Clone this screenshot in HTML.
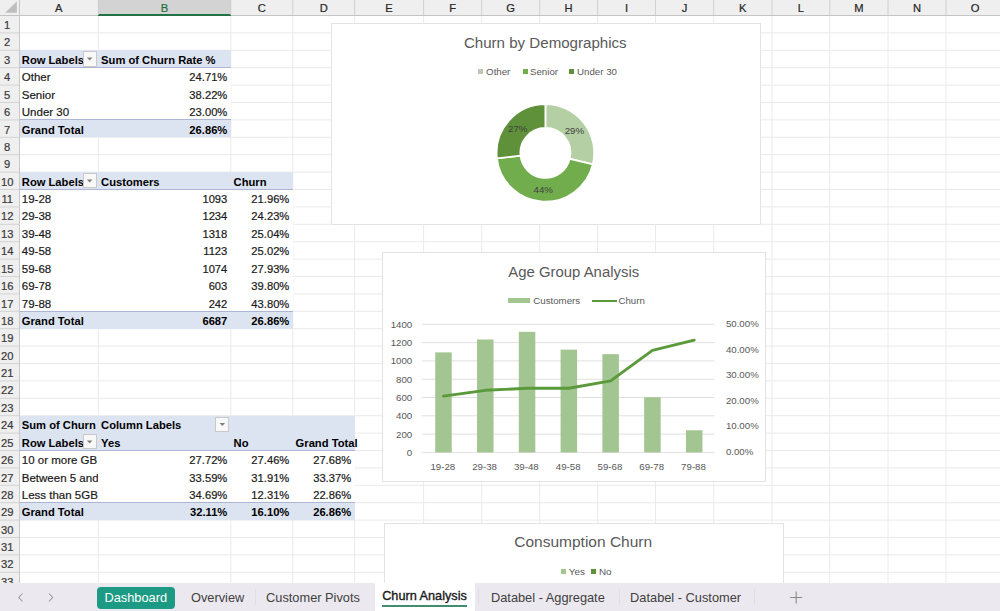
<!DOCTYPE html>
<html><head><meta charset="utf-8"><style>
html,body{margin:0;padding:0;}
body{width:1000px;height:611px;overflow:hidden;position:relative;background:#fff;font-family:"Liberation Sans", sans-serif;}
.t{position:absolute;white-space:nowrap;-webkit-text-stroke:0.2px currentColor;}
.b{-webkit-text-stroke:0;}
div{position:absolute;}
</style></head><body>
<svg style="position:absolute;left:0;top:0" width="1000" height="611"><line x1="98.3" y1="15.5" x2="98.3" y2="583" stroke="#eaeaea" stroke-width="1"/><line x1="230.8" y1="15.5" x2="230.8" y2="583" stroke="#eaeaea" stroke-width="1"/><line x1="292.8" y1="15.5" x2="292.8" y2="583" stroke="#eaeaea" stroke-width="1"/><line x1="354.6" y1="15.5" x2="354.6" y2="583" stroke="#eaeaea" stroke-width="1"/><line x1="423.6" y1="15.5" x2="423.6" y2="583" stroke="#eaeaea" stroke-width="1"/><line x1="481.7" y1="15.5" x2="481.7" y2="583" stroke="#eaeaea" stroke-width="1"/><line x1="539.7" y1="15.5" x2="539.7" y2="583" stroke="#eaeaea" stroke-width="1"/><line x1="597.6" y1="15.5" x2="597.6" y2="583" stroke="#eaeaea" stroke-width="1"/><line x1="655.5" y1="15.5" x2="655.5" y2="583" stroke="#eaeaea" stroke-width="1"/><line x1="713.7" y1="15.5" x2="713.7" y2="583" stroke="#eaeaea" stroke-width="1"/><line x1="772" y1="15.5" x2="772" y2="583" stroke="#eaeaea" stroke-width="1"/><line x1="829.8" y1="15.5" x2="829.8" y2="583" stroke="#eaeaea" stroke-width="1"/><line x1="888" y1="15.5" x2="888" y2="583" stroke="#eaeaea" stroke-width="1"/><line x1="946" y1="15.5" x2="946" y2="583" stroke="#eaeaea" stroke-width="1"/><line x1="1004" y1="15.5" x2="1004" y2="583" stroke="#eaeaea" stroke-width="1"/><line x1="19" y1="32.90" x2="1000" y2="32.90" stroke="#eaeaea" stroke-width="1"/><line x1="19" y1="50.30" x2="1000" y2="50.30" stroke="#eaeaea" stroke-width="1"/><line x1="19" y1="67.70" x2="1000" y2="67.70" stroke="#eaeaea" stroke-width="1"/><line x1="19" y1="85.10" x2="1000" y2="85.10" stroke="#eaeaea" stroke-width="1"/><line x1="19" y1="102.50" x2="1000" y2="102.50" stroke="#eaeaea" stroke-width="1"/><line x1="19" y1="119.90" x2="1000" y2="119.90" stroke="#eaeaea" stroke-width="1"/><line x1="19" y1="137.30" x2="1000" y2="137.30" stroke="#eaeaea" stroke-width="1"/><line x1="19" y1="154.70" x2="1000" y2="154.70" stroke="#eaeaea" stroke-width="1"/><line x1="19" y1="172.10" x2="1000" y2="172.10" stroke="#eaeaea" stroke-width="1"/><line x1="19" y1="189.50" x2="1000" y2="189.50" stroke="#eaeaea" stroke-width="1"/><line x1="19" y1="206.90" x2="1000" y2="206.90" stroke="#eaeaea" stroke-width="1"/><line x1="19" y1="224.30" x2="1000" y2="224.30" stroke="#eaeaea" stroke-width="1"/><line x1="19" y1="241.70" x2="1000" y2="241.70" stroke="#eaeaea" stroke-width="1"/><line x1="19" y1="259.10" x2="1000" y2="259.10" stroke="#eaeaea" stroke-width="1"/><line x1="19" y1="276.50" x2="1000" y2="276.50" stroke="#eaeaea" stroke-width="1"/><line x1="19" y1="293.90" x2="1000" y2="293.90" stroke="#eaeaea" stroke-width="1"/><line x1="19" y1="311.30" x2="1000" y2="311.30" stroke="#eaeaea" stroke-width="1"/><line x1="19" y1="328.70" x2="1000" y2="328.70" stroke="#eaeaea" stroke-width="1"/><line x1="19" y1="346.10" x2="1000" y2="346.10" stroke="#eaeaea" stroke-width="1"/><line x1="19" y1="363.50" x2="1000" y2="363.50" stroke="#eaeaea" stroke-width="1"/><line x1="19" y1="380.90" x2="1000" y2="380.90" stroke="#eaeaea" stroke-width="1"/><line x1="19" y1="398.30" x2="1000" y2="398.30" stroke="#eaeaea" stroke-width="1"/><line x1="19" y1="415.70" x2="1000" y2="415.70" stroke="#eaeaea" stroke-width="1"/><line x1="19" y1="433.10" x2="1000" y2="433.10" stroke="#eaeaea" stroke-width="1"/><line x1="19" y1="450.50" x2="1000" y2="450.50" stroke="#eaeaea" stroke-width="1"/><line x1="19" y1="467.90" x2="1000" y2="467.90" stroke="#eaeaea" stroke-width="1"/><line x1="19" y1="485.30" x2="1000" y2="485.30" stroke="#eaeaea" stroke-width="1"/><line x1="19" y1="502.70" x2="1000" y2="502.70" stroke="#eaeaea" stroke-width="1"/><line x1="19" y1="520.10" x2="1000" y2="520.10" stroke="#eaeaea" stroke-width="1"/><line x1="19" y1="537.50" x2="1000" y2="537.50" stroke="#eaeaea" stroke-width="1"/><line x1="19" y1="554.90" x2="1000" y2="554.90" stroke="#eaeaea" stroke-width="1"/><line x1="19" y1="572.30" x2="1000" y2="572.30" stroke="#eaeaea" stroke-width="1"/><line x1="19" y1="589.70" x2="1000" y2="589.70" stroke="#eaeaea" stroke-width="1"/><line x1="19" y1="607.10" x2="1000" y2="607.10" stroke="#eaeaea" stroke-width="1"/></svg>
<div style="position:absolute;left:19.00px;top:50.30px;width:211.80px;height:87.00px;background:#fff;"></div>
<div style="position:absolute;left:19.00px;top:172.10px;width:273.80px;height:156.60px;background:#fff;"></div>
<div style="position:absolute;left:19.00px;top:415.70px;width:335.60px;height:104.40px;background:#fff;"></div>
<div style="position:absolute;left:19.00px;top:50.30px;width:211.80px;height:17.40px;background:#dce3f1;"></div>
<div style="position:absolute;left:19.00px;top:119.90px;width:211.80px;height:17.40px;background:#dce3f1;"></div>
<div style="position:absolute;left:19.00px;top:66.70px;width:211.80px;height:1.00px;background:#adb6d4;"></div>
<div style="position:absolute;left:19.00px;top:119.40px;width:211.80px;height:1.00px;background:#adb6d4;"></div>
<div style="position:absolute;left:19.00px;top:172.10px;width:273.80px;height:17.40px;background:#dce3f1;"></div>
<div style="position:absolute;left:19.00px;top:311.30px;width:273.80px;height:17.40px;background:#dce3f1;"></div>
<div style="position:absolute;left:19.00px;top:188.50px;width:273.80px;height:1.00px;background:#adb6d4;"></div>
<div style="position:absolute;left:19.00px;top:310.80px;width:273.80px;height:1.00px;background:#adb6d4;"></div>
<div style="position:absolute;left:19.00px;top:415.70px;width:335.60px;height:34.80px;background:#dce3f1;"></div>
<div style="position:absolute;left:19.00px;top:502.70px;width:335.60px;height:17.40px;background:#dce3f1;"></div>
<div style="position:absolute;left:19.00px;top:449.50px;width:335.60px;height:1.00px;background:#adb6d4;"></div>
<div style="position:absolute;left:19.00px;top:502.20px;width:335.60px;height:1.00px;background:#adb6d4;"></div>
<div class="t b" style="left:21.80px;top:55.00px;font-size:11.2px;line-height:11.2px;font-weight:bold;color:#000;">Row Labels</div>
<div style="position:absolute;left:82.50px;top:51.10px;width:14.30px;height:15.60px;background:#f8f8f8;border:1px solid #c9c9c9;box-sizing:border-box;"></div>
<svg style="position:absolute;left:0;top:0" width="1000" height="611"><path d="M86.85 57.60 L92.45 57.60 L89.65 60.60 Z" fill="#808080"/></svg>
<div class="t b" style="left:101.10px;top:55.00px;font-size:11.2px;line-height:11.2px;font-weight:bold;color:#000;">Sum of Churn Rate %</div>
<div class="t" style="left:21.80px;top:72.00px;font-size:11.5px;line-height:11.5px;font-weight:normal;color:#1a1a1a;">Other</div>
<div class="t" style="left:-172.70px;width:400px;text-align:right;top:72.00px;font-size:11.2px;line-height:11.2px;font-weight:normal;color:#1a1a1a;">24.71%</div>
<div class="t" style="left:21.80px;top:90.00px;font-size:11.5px;line-height:11.5px;font-weight:normal;color:#1a1a1a;">Senior</div>
<div class="t" style="left:-172.70px;width:400px;text-align:right;top:90.00px;font-size:11.2px;line-height:11.2px;font-weight:normal;color:#1a1a1a;">38.22%</div>
<div class="t" style="left:21.80px;top:107.00px;font-size:11.5px;line-height:11.5px;font-weight:normal;color:#1a1a1a;">Under 30</div>
<div class="t" style="left:-172.70px;width:400px;text-align:right;top:107.00px;font-size:11.2px;line-height:11.2px;font-weight:normal;color:#1a1a1a;">23.00%</div>
<div class="t b" style="left:21.80px;top:125.00px;font-size:11.2px;line-height:11.2px;font-weight:bold;color:#000;">Grand Total</div>
<div class="t b" style="left:-172.70px;width:400px;text-align:right;top:125.00px;font-size:11.2px;line-height:11.2px;font-weight:bold;color:#000;">26.86%</div>
<div class="t b" style="left:21.80px;top:177.00px;font-size:11.2px;line-height:11.2px;font-weight:bold;color:#000;">Row Labels</div>
<div style="position:absolute;left:82.50px;top:172.90px;width:14.30px;height:15.60px;background:#f8f8f8;border:1px solid #c9c9c9;box-sizing:border-box;"></div>
<svg style="position:absolute;left:0;top:0" width="1000" height="611"><path d="M86.85 179.40 L92.45 179.40 L89.65 182.40 Z" fill="#808080"/></svg>
<div class="t b" style="left:101.10px;top:177.00px;font-size:11.2px;line-height:11.2px;font-weight:bold;color:#000;">Customers</div>
<div class="t b" style="left:233.60px;top:177.00px;font-size:11.2px;line-height:11.2px;font-weight:bold;color:#000;">Churn</div>
<div class="t" style="left:21.80px;top:194.00px;font-size:11.5px;line-height:11.5px;font-weight:normal;color:#1a1a1a;">19-28</div>
<div class="t" style="left:-172.70px;width:400px;text-align:right;top:194.00px;font-size:11.2px;line-height:11.2px;font-weight:normal;color:#1a1a1a;">1093</div>
<div class="t" style="left:-110.70px;width:400px;text-align:right;top:194.00px;font-size:11.2px;line-height:11.2px;font-weight:normal;color:#1a1a1a;">21.96%</div>
<div class="t" style="left:21.80px;top:211.00px;font-size:11.5px;line-height:11.5px;font-weight:normal;color:#1a1a1a;">29-38</div>
<div class="t" style="left:-172.70px;width:400px;text-align:right;top:211.00px;font-size:11.2px;line-height:11.2px;font-weight:normal;color:#1a1a1a;">1234</div>
<div class="t" style="left:-110.70px;width:400px;text-align:right;top:211.00px;font-size:11.2px;line-height:11.2px;font-weight:normal;color:#1a1a1a;">24.23%</div>
<div class="t" style="left:21.80px;top:229.00px;font-size:11.5px;line-height:11.5px;font-weight:normal;color:#1a1a1a;">39-48</div>
<div class="t" style="left:-172.70px;width:400px;text-align:right;top:229.00px;font-size:11.2px;line-height:11.2px;font-weight:normal;color:#1a1a1a;">1318</div>
<div class="t" style="left:-110.70px;width:400px;text-align:right;top:229.00px;font-size:11.2px;line-height:11.2px;font-weight:normal;color:#1a1a1a;">25.04%</div>
<div class="t" style="left:21.80px;top:246.00px;font-size:11.5px;line-height:11.5px;font-weight:normal;color:#1a1a1a;">49-58</div>
<div class="t" style="left:-172.70px;width:400px;text-align:right;top:246.00px;font-size:11.2px;line-height:11.2px;font-weight:normal;color:#1a1a1a;">1123</div>
<div class="t" style="left:-110.70px;width:400px;text-align:right;top:246.00px;font-size:11.2px;line-height:11.2px;font-weight:normal;color:#1a1a1a;">25.02%</div>
<div class="t" style="left:21.80px;top:264.00px;font-size:11.5px;line-height:11.5px;font-weight:normal;color:#1a1a1a;">59-68</div>
<div class="t" style="left:-172.70px;width:400px;text-align:right;top:264.00px;font-size:11.2px;line-height:11.2px;font-weight:normal;color:#1a1a1a;">1074</div>
<div class="t" style="left:-110.70px;width:400px;text-align:right;top:264.00px;font-size:11.2px;line-height:11.2px;font-weight:normal;color:#1a1a1a;">27.93%</div>
<div class="t" style="left:21.80px;top:281.00px;font-size:11.5px;line-height:11.5px;font-weight:normal;color:#1a1a1a;">69-78</div>
<div class="t" style="left:-172.70px;width:400px;text-align:right;top:281.00px;font-size:11.2px;line-height:11.2px;font-weight:normal;color:#1a1a1a;">603</div>
<div class="t" style="left:-110.70px;width:400px;text-align:right;top:281.00px;font-size:11.2px;line-height:11.2px;font-weight:normal;color:#1a1a1a;">39.80%</div>
<div class="t" style="left:21.80px;top:299.00px;font-size:11.5px;line-height:11.5px;font-weight:normal;color:#1a1a1a;">79-88</div>
<div class="t" style="left:-172.70px;width:400px;text-align:right;top:299.00px;font-size:11.2px;line-height:11.2px;font-weight:normal;color:#1a1a1a;">242</div>
<div class="t" style="left:-110.70px;width:400px;text-align:right;top:299.00px;font-size:11.2px;line-height:11.2px;font-weight:normal;color:#1a1a1a;">43.80%</div>
<div class="t b" style="left:21.80px;top:316.00px;font-size:11.2px;line-height:11.2px;font-weight:bold;color:#000;">Grand Total</div>
<div class="t b" style="left:-172.70px;width:400px;text-align:right;top:316.00px;font-size:11.2px;line-height:11.2px;font-weight:bold;color:#000;">6687</div>
<div class="t b" style="left:-110.70px;width:400px;text-align:right;top:316.00px;font-size:11.2px;line-height:11.2px;font-weight:bold;color:#000;">26.86%</div>
<div class="t b" style="left:21.80px;top:420.00px;font-size:11.2px;line-height:11.2px;font-weight:bold;color:#000;width:76.50px;overflow:hidden;white-space:nowrap;">Sum of Churn</div>
<div class="t b" style="left:101.10px;top:420.00px;font-size:11.2px;line-height:11.2px;font-weight:bold;color:#000;">Column Labels</div>
<div style="position:absolute;left:215.20px;top:416.50px;width:14.30px;height:15.60px;background:#f8f8f8;border:1px solid #c9c9c9;box-sizing:border-box;"></div>
<svg style="position:absolute;left:0;top:0" width="1000" height="611"><path d="M219.55 423.00 L225.15 423.00 L222.35 426.00 Z" fill="#808080"/></svg>
<div class="t b" style="left:21.80px;top:438.00px;font-size:11.2px;line-height:11.2px;font-weight:bold;color:#000;">Row Labels</div>
<div style="position:absolute;left:82.50px;top:433.90px;width:14.30px;height:15.60px;background:#f8f8f8;border:1px solid #c9c9c9;box-sizing:border-box;"></div>
<svg style="position:absolute;left:0;top:0" width="1000" height="611"><path d="M86.85 440.40 L92.45 440.40 L89.65 443.40 Z" fill="#808080"/></svg>
<div class="t b" style="left:101.10px;top:438.00px;font-size:11.2px;line-height:11.2px;font-weight:bold;color:#000;">Yes</div>
<div class="t b" style="left:233.60px;top:438.00px;font-size:11.2px;line-height:11.2px;font-weight:bold;color:#000;">No</div>
<div class="t b" style="left:295.60px;top:438.00px;font-size:11.2px;line-height:11.2px;font-weight:bold;color:#000;">Grand Total</div>
<div class="t" style="left:21.80px;top:455.00px;font-size:11.5px;line-height:11.5px;font-weight:normal;color:#1a1a1a;width:76.50px;overflow:hidden;white-space:nowrap;">10 or more GB</div>
<div class="t" style="left:-172.70px;width:400px;text-align:right;top:455.00px;font-size:11.2px;line-height:11.2px;font-weight:normal;color:#1a1a1a;">27.72%</div>
<div class="t" style="left:-110.70px;width:400px;text-align:right;top:455.00px;font-size:11.2px;line-height:11.2px;font-weight:normal;color:#1a1a1a;">27.46%</div>
<div class="t" style="left:-48.90px;width:400px;text-align:right;top:455.00px;font-size:11.2px;line-height:11.2px;font-weight:normal;color:#1a1a1a;">27.68%</div>
<div class="t" style="left:21.80px;top:473.00px;font-size:11.5px;line-height:11.5px;font-weight:normal;color:#1a1a1a;width:76.50px;overflow:hidden;white-space:nowrap;">Between 5 and 10 GB</div>
<div class="t" style="left:-172.70px;width:400px;text-align:right;top:473.00px;font-size:11.2px;line-height:11.2px;font-weight:normal;color:#1a1a1a;">33.59%</div>
<div class="t" style="left:-110.70px;width:400px;text-align:right;top:473.00px;font-size:11.2px;line-height:11.2px;font-weight:normal;color:#1a1a1a;">31.91%</div>
<div class="t" style="left:-48.90px;width:400px;text-align:right;top:473.00px;font-size:11.2px;line-height:11.2px;font-weight:normal;color:#1a1a1a;">33.37%</div>
<div class="t" style="left:21.80px;top:490.00px;font-size:11.5px;line-height:11.5px;font-weight:normal;color:#1a1a1a;width:76.50px;overflow:hidden;white-space:nowrap;">Less than 5GB</div>
<div class="t" style="left:-172.70px;width:400px;text-align:right;top:490.00px;font-size:11.2px;line-height:11.2px;font-weight:normal;color:#1a1a1a;">34.69%</div>
<div class="t" style="left:-110.70px;width:400px;text-align:right;top:490.00px;font-size:11.2px;line-height:11.2px;font-weight:normal;color:#1a1a1a;">12.31%</div>
<div class="t" style="left:-48.90px;width:400px;text-align:right;top:490.00px;font-size:11.2px;line-height:11.2px;font-weight:normal;color:#1a1a1a;">22.86%</div>
<div class="t b" style="left:21.80px;top:507.00px;font-size:11.2px;line-height:11.2px;font-weight:bold;color:#000;">Grand Total</div>
<div class="t b" style="left:-172.70px;width:400px;text-align:right;top:507.00px;font-size:11.2px;line-height:11.2px;font-weight:bold;color:#000;">32.11%</div>
<div class="t b" style="left:-110.70px;width:400px;text-align:right;top:507.00px;font-size:11.2px;line-height:11.2px;font-weight:bold;color:#000;">16.10%</div>
<div class="t b" style="left:-48.90px;width:400px;text-align:right;top:507.00px;font-size:11.2px;line-height:11.2px;font-weight:bold;color:#000;">26.86%</div>
<div style="position:absolute;left:0.00px;top:0.00px;width:1000.00px;height:15.00px;background:#efefef;"></div>
<div style="position:absolute;left:98.30px;top:0.00px;width:132.50px;height:15.00px;background:#d3d3d3;"></div>
<div style="position:absolute;left:0.00px;top:15.00px;width:1000.00px;height:1.00px;background:#c4c4c4;"></div>
<div style="position:absolute;left:98.30px;top:14.00px;width:132.50px;height:2.00px;background:#217346;"></div>
<div style="position:absolute;left:0.00px;top:16.00px;width:19.00px;height:567.00px;background:#efefef;"></div>
<div style="position:absolute;left:19.00px;top:0.00px;width:1.00px;height:583.00px;background:#c8c8c8;"></div>
<svg style="position:absolute;left:0;top:0" width="1000" height="16"><line x1="98.3" y1="0" x2="98.3" y2="15" stroke="#d0d0d0" stroke-width="1"/><line x1="230.8" y1="0" x2="230.8" y2="15" stroke="#d0d0d0" stroke-width="1"/><line x1="292.8" y1="0" x2="292.8" y2="15" stroke="#d0d0d0" stroke-width="1"/><line x1="354.6" y1="0" x2="354.6" y2="15" stroke="#d0d0d0" stroke-width="1"/><line x1="423.6" y1="0" x2="423.6" y2="15" stroke="#d0d0d0" stroke-width="1"/><line x1="481.7" y1="0" x2="481.7" y2="15" stroke="#d0d0d0" stroke-width="1"/><line x1="539.7" y1="0" x2="539.7" y2="15" stroke="#d0d0d0" stroke-width="1"/><line x1="597.6" y1="0" x2="597.6" y2="15" stroke="#d0d0d0" stroke-width="1"/><line x1="655.5" y1="0" x2="655.5" y2="15" stroke="#d0d0d0" stroke-width="1"/><line x1="713.7" y1="0" x2="713.7" y2="15" stroke="#d0d0d0" stroke-width="1"/><line x1="772" y1="0" x2="772" y2="15" stroke="#d0d0d0" stroke-width="1"/><line x1="829.8" y1="0" x2="829.8" y2="15" stroke="#d0d0d0" stroke-width="1"/><line x1="888" y1="0" x2="888" y2="15" stroke="#d0d0d0" stroke-width="1"/><line x1="946" y1="0" x2="946" y2="15" stroke="#d0d0d0" stroke-width="1"/><line x1="1004" y1="0" x2="1004" y2="15" stroke="#d0d0d0" stroke-width="1"/><path d="M16.8 1.6 L16.8 12.8 L5.2 12.8 Z" fill="#bdbdbd"/></svg>
<div class="t" style="left:-241.35px;width:600px;text-align:center;top:3.00px;font-size:11.2px;line-height:11.2px;font-weight:normal;color:#262626;">A</div>
<div class="t" style="left:-135.45px;width:600px;text-align:center;top:3.00px;font-size:11.2px;line-height:11.2px;font-weight:normal;color:#1e6e42;">B</div>
<div class="t" style="left:-38.20px;width:600px;text-align:center;top:3.00px;font-size:11.2px;line-height:11.2px;font-weight:normal;color:#262626;">C</div>
<div class="t" style="left:23.70px;width:600px;text-align:center;top:3.00px;font-size:11.2px;line-height:11.2px;font-weight:normal;color:#262626;">D</div>
<div class="t" style="left:89.10px;width:600px;text-align:center;top:3.00px;font-size:11.2px;line-height:11.2px;font-weight:normal;color:#262626;">E</div>
<div class="t" style="left:152.65px;width:600px;text-align:center;top:3.00px;font-size:11.2px;line-height:11.2px;font-weight:normal;color:#262626;">F</div>
<div class="t" style="left:210.70px;width:600px;text-align:center;top:3.00px;font-size:11.2px;line-height:11.2px;font-weight:normal;color:#262626;">G</div>
<div class="t" style="left:268.65px;width:600px;text-align:center;top:3.00px;font-size:11.2px;line-height:11.2px;font-weight:normal;color:#262626;">H</div>
<div class="t" style="left:326.55px;width:600px;text-align:center;top:3.00px;font-size:11.2px;line-height:11.2px;font-weight:normal;color:#262626;">I</div>
<div class="t" style="left:384.60px;width:600px;text-align:center;top:3.00px;font-size:11.2px;line-height:11.2px;font-weight:normal;color:#262626;">J</div>
<div class="t" style="left:442.85px;width:600px;text-align:center;top:3.00px;font-size:11.2px;line-height:11.2px;font-weight:normal;color:#262626;">K</div>
<div class="t" style="left:500.90px;width:600px;text-align:center;top:3.00px;font-size:11.2px;line-height:11.2px;font-weight:normal;color:#262626;">L</div>
<div class="t" style="left:558.90px;width:600px;text-align:center;top:3.00px;font-size:11.2px;line-height:11.2px;font-weight:normal;color:#262626;">M</div>
<div class="t" style="left:617.00px;width:600px;text-align:center;top:3.00px;font-size:11.2px;line-height:11.2px;font-weight:normal;color:#262626;">N</div>
<div class="t" style="left:675.00px;width:600px;text-align:center;top:3.00px;font-size:11.2px;line-height:11.2px;font-weight:normal;color:#262626;">O</div>
<svg style="position:absolute;left:0;top:0" width="20" height="583"><line x1="0" y1="32.90" x2="19" y2="32.90" stroke="#d4d4d4" stroke-width="1"/><line x1="0" y1="50.30" x2="19" y2="50.30" stroke="#d4d4d4" stroke-width="1"/><line x1="0" y1="67.70" x2="19" y2="67.70" stroke="#d4d4d4" stroke-width="1"/><line x1="0" y1="85.10" x2="19" y2="85.10" stroke="#d4d4d4" stroke-width="1"/><line x1="0" y1="102.50" x2="19" y2="102.50" stroke="#d4d4d4" stroke-width="1"/><line x1="0" y1="119.90" x2="19" y2="119.90" stroke="#d4d4d4" stroke-width="1"/><line x1="0" y1="137.30" x2="19" y2="137.30" stroke="#d4d4d4" stroke-width="1"/><line x1="0" y1="154.70" x2="19" y2="154.70" stroke="#d4d4d4" stroke-width="1"/><line x1="0" y1="172.10" x2="19" y2="172.10" stroke="#d4d4d4" stroke-width="1"/><line x1="0" y1="189.50" x2="19" y2="189.50" stroke="#d4d4d4" stroke-width="1"/><line x1="0" y1="206.90" x2="19" y2="206.90" stroke="#d4d4d4" stroke-width="1"/><line x1="0" y1="224.30" x2="19" y2="224.30" stroke="#d4d4d4" stroke-width="1"/><line x1="0" y1="241.70" x2="19" y2="241.70" stroke="#d4d4d4" stroke-width="1"/><line x1="0" y1="259.10" x2="19" y2="259.10" stroke="#d4d4d4" stroke-width="1"/><line x1="0" y1="276.50" x2="19" y2="276.50" stroke="#d4d4d4" stroke-width="1"/><line x1="0" y1="293.90" x2="19" y2="293.90" stroke="#d4d4d4" stroke-width="1"/><line x1="0" y1="311.30" x2="19" y2="311.30" stroke="#d4d4d4" stroke-width="1"/><line x1="0" y1="328.70" x2="19" y2="328.70" stroke="#d4d4d4" stroke-width="1"/><line x1="0" y1="346.10" x2="19" y2="346.10" stroke="#d4d4d4" stroke-width="1"/><line x1="0" y1="363.50" x2="19" y2="363.50" stroke="#d4d4d4" stroke-width="1"/><line x1="0" y1="380.90" x2="19" y2="380.90" stroke="#d4d4d4" stroke-width="1"/><line x1="0" y1="398.30" x2="19" y2="398.30" stroke="#d4d4d4" stroke-width="1"/><line x1="0" y1="415.70" x2="19" y2="415.70" stroke="#d4d4d4" stroke-width="1"/><line x1="0" y1="433.10" x2="19" y2="433.10" stroke="#d4d4d4" stroke-width="1"/><line x1="0" y1="450.50" x2="19" y2="450.50" stroke="#d4d4d4" stroke-width="1"/><line x1="0" y1="467.90" x2="19" y2="467.90" stroke="#d4d4d4" stroke-width="1"/><line x1="0" y1="485.30" x2="19" y2="485.30" stroke="#d4d4d4" stroke-width="1"/><line x1="0" y1="502.70" x2="19" y2="502.70" stroke="#d4d4d4" stroke-width="1"/><line x1="0" y1="520.10" x2="19" y2="520.10" stroke="#d4d4d4" stroke-width="1"/><line x1="0" y1="537.50" x2="19" y2="537.50" stroke="#d4d4d4" stroke-width="1"/><line x1="0" y1="554.90" x2="19" y2="554.90" stroke="#d4d4d4" stroke-width="1"/><line x1="0" y1="572.30" x2="19" y2="572.30" stroke="#d4d4d4" stroke-width="1"/><line x1="0" y1="589.70" x2="19" y2="589.70" stroke="#d4d4d4" stroke-width="1"/></svg>
<div class="t" style="left:-292.80px;width:600px;text-align:center;top:20.00px;font-size:11.2px;line-height:11.2px;font-weight:normal;color:#3a3a3a;">1</div>
<div class="t" style="left:-292.80px;width:600px;text-align:center;top:37.00px;font-size:11.2px;line-height:11.2px;font-weight:normal;color:#3a3a3a;">2</div>
<div class="t" style="left:-292.80px;width:600px;text-align:center;top:55.00px;font-size:11.2px;line-height:11.2px;font-weight:normal;color:#3a3a3a;">3</div>
<div class="t" style="left:-292.80px;width:600px;text-align:center;top:72.00px;font-size:11.2px;line-height:11.2px;font-weight:normal;color:#3a3a3a;">4</div>
<div class="t" style="left:-292.80px;width:600px;text-align:center;top:90.00px;font-size:11.2px;line-height:11.2px;font-weight:normal;color:#3a3a3a;">5</div>
<div class="t" style="left:-292.80px;width:600px;text-align:center;top:107.00px;font-size:11.2px;line-height:11.2px;font-weight:normal;color:#3a3a3a;">6</div>
<div class="t" style="left:-292.80px;width:600px;text-align:center;top:125.00px;font-size:11.2px;line-height:11.2px;font-weight:normal;color:#3a3a3a;">7</div>
<div class="t" style="left:-292.80px;width:600px;text-align:center;top:142.00px;font-size:11.2px;line-height:11.2px;font-weight:normal;color:#3a3a3a;">8</div>
<div class="t" style="left:-292.80px;width:600px;text-align:center;top:159.00px;font-size:11.2px;line-height:11.2px;font-weight:normal;color:#3a3a3a;">9</div>
<div class="t" style="left:-292.80px;width:600px;text-align:center;top:177.00px;font-size:11.2px;line-height:11.2px;font-weight:normal;color:#3a3a3a;">10</div>
<div class="t" style="left:-292.80px;width:600px;text-align:center;top:194.00px;font-size:11.2px;line-height:11.2px;font-weight:normal;color:#3a3a3a;">11</div>
<div class="t" style="left:-292.80px;width:600px;text-align:center;top:211.00px;font-size:11.2px;line-height:11.2px;font-weight:normal;color:#3a3a3a;">12</div>
<div class="t" style="left:-292.80px;width:600px;text-align:center;top:229.00px;font-size:11.2px;line-height:11.2px;font-weight:normal;color:#3a3a3a;">13</div>
<div class="t" style="left:-292.80px;width:600px;text-align:center;top:246.00px;font-size:11.2px;line-height:11.2px;font-weight:normal;color:#3a3a3a;">14</div>
<div class="t" style="left:-292.80px;width:600px;text-align:center;top:264.00px;font-size:11.2px;line-height:11.2px;font-weight:normal;color:#3a3a3a;">15</div>
<div class="t" style="left:-292.80px;width:600px;text-align:center;top:281.00px;font-size:11.2px;line-height:11.2px;font-weight:normal;color:#3a3a3a;">16</div>
<div class="t" style="left:-292.80px;width:600px;text-align:center;top:299.00px;font-size:11.2px;line-height:11.2px;font-weight:normal;color:#3a3a3a;">17</div>
<div class="t" style="left:-292.80px;width:600px;text-align:center;top:316.00px;font-size:11.2px;line-height:11.2px;font-weight:normal;color:#3a3a3a;">18</div>
<div class="t" style="left:-292.80px;width:600px;text-align:center;top:333.00px;font-size:11.2px;line-height:11.2px;font-weight:normal;color:#3a3a3a;">19</div>
<div class="t" style="left:-292.80px;width:600px;text-align:center;top:351.00px;font-size:11.2px;line-height:11.2px;font-weight:normal;color:#3a3a3a;">20</div>
<div class="t" style="left:-292.80px;width:600px;text-align:center;top:368.00px;font-size:11.2px;line-height:11.2px;font-weight:normal;color:#3a3a3a;">21</div>
<div class="t" style="left:-292.80px;width:600px;text-align:center;top:385.00px;font-size:11.2px;line-height:11.2px;font-weight:normal;color:#3a3a3a;">22</div>
<div class="t" style="left:-292.80px;width:600px;text-align:center;top:403.00px;font-size:11.2px;line-height:11.2px;font-weight:normal;color:#3a3a3a;">23</div>
<div class="t" style="left:-292.80px;width:600px;text-align:center;top:420.00px;font-size:11.2px;line-height:11.2px;font-weight:normal;color:#3a3a3a;">24</div>
<div class="t" style="left:-292.80px;width:600px;text-align:center;top:438.00px;font-size:11.2px;line-height:11.2px;font-weight:normal;color:#3a3a3a;">25</div>
<div class="t" style="left:-292.80px;width:600px;text-align:center;top:455.00px;font-size:11.2px;line-height:11.2px;font-weight:normal;color:#3a3a3a;">26</div>
<div class="t" style="left:-292.80px;width:600px;text-align:center;top:473.00px;font-size:11.2px;line-height:11.2px;font-weight:normal;color:#3a3a3a;">27</div>
<div class="t" style="left:-292.80px;width:600px;text-align:center;top:490.00px;font-size:11.2px;line-height:11.2px;font-weight:normal;color:#3a3a3a;">28</div>
<div class="t" style="left:-292.80px;width:600px;text-align:center;top:507.00px;font-size:11.2px;line-height:11.2px;font-weight:normal;color:#3a3a3a;">29</div>
<div class="t" style="left:-292.80px;width:600px;text-align:center;top:525.00px;font-size:11.2px;line-height:11.2px;font-weight:normal;color:#3a3a3a;">30</div>
<div class="t" style="left:-292.80px;width:600px;text-align:center;top:542.00px;font-size:11.2px;line-height:11.2px;font-weight:normal;color:#3a3a3a;">31</div>
<div class="t" style="left:-292.80px;width:600px;text-align:center;top:559.00px;font-size:11.2px;line-height:11.2px;font-weight:normal;color:#3a3a3a;">32</div>
<div class="t" style="left:-292.80px;width:600px;text-align:center;top:577.00px;font-size:11.2px;line-height:11.2px;font-weight:normal;color:#3a3a3a;">33</div>
<div style="position:absolute;left:331.30px;top:22.50px;width:429.60px;height:202.60px;background:#fff;border:1px solid #e3e3e3;box-sizing:border-box;"></div>
<div class="t b" style="left:245.30px;width:600px;text-align:center;top:35.00px;font-size:15.1px;line-height:15.1px;font-weight:normal;color:#595959;">Churn by Demographics</div>
<div style="position:absolute;left:478.00px;top:69.00px;width:5.00px;height:5.00px;background:#bcc8b4;"></div>
<div class="t b" style="left:486.10px;top:67.00px;font-size:9.7px;line-height:9.7px;font-weight:normal;color:#595959;">Other</div>
<div style="position:absolute;left:523.00px;top:69.00px;width:5.00px;height:5.00px;background:#72ad4d;"></div>
<div class="t b" style="left:530.00px;top:67.00px;font-size:9.7px;line-height:9.7px;font-weight:normal;color:#595959;">Senior</div>
<div style="position:absolute;left:568.80px;top:69.00px;width:5.00px;height:5.00px;background:#5e9139;"></div>
<div class="t b" style="left:577.10px;top:67.00px;font-size:9.7px;line-height:9.7px;font-weight:normal;color:#595959;">Under 30</div>
<svg style="position:absolute;left:0;top:0" width="1000" height="611"><path d="M545.40 104.10 A48.8 48.8 0 0 1 592.85 164.31 L569.71 158.75 A25 25 0 0 0 545.40 127.90 Z" fill="#b3cfa3" stroke="#fff" stroke-width="1.8"/><path d="M592.85 164.31 A48.8 48.8 0 0 1 496.90 158.30 L520.55 155.67 A25 25 0 0 0 569.71 158.75 Z" fill="#72ad4d" stroke="#fff" stroke-width="1.8"/><path d="M496.90 158.30 A48.8 48.8 0 0 1 545.40 104.10 L545.40 127.90 A25 25 0 0 0 520.55 155.67 Z" fill="#5e9139" stroke="#fff" stroke-width="1.8"/></svg>
<div class="t b" style="left:274.40px;width:600px;text-align:center;top:126.00px;font-size:9.7px;line-height:9.7px;font-weight:normal;color:#404040;">29%</div>
<div class="t b" style="left:217.80px;width:600px;text-align:center;top:124.00px;font-size:9.7px;line-height:9.7px;font-weight:normal;color:#404040;">27%</div>
<div class="t b" style="left:243.30px;width:600px;text-align:center;top:185.00px;font-size:9.7px;line-height:9.7px;font-weight:normal;color:#404040;">44%</div>
<div style="position:absolute;left:381.50px;top:251.60px;width:384.90px;height:230.00px;background:#fff;border:1px solid #e3e3e3;box-sizing:border-box;"></div>
<div class="t b" style="left:273.75px;width:600px;text-align:center;top:265.00px;font-size:14.9px;line-height:14.9px;font-weight:normal;color:#595959;">Age Group Analysis</div>
<div style="position:absolute;left:507.70px;top:297.90px;width:22.70px;height:5.30px;background:#a3c592;"></div>
<div class="t b" style="left:533.30px;top:296.00px;font-size:9.7px;line-height:9.7px;font-weight:normal;color:#595959;">Customers</div>
<div style="position:absolute;left:591.50px;top:299.60px;width:25.00px;height:2.50px;background:#5a9a3a;"></div>
<div class="t b" style="left:618.40px;top:296.00px;font-size:9.7px;line-height:9.7px;font-weight:normal;color:#595959;">Churn</div>
<svg style="position:absolute;left:0;top:0" width="1000" height="611"><line x1="421.9" y1="452.40" x2="714.4" y2="452.40" stroke="#e0e0e0" stroke-width="1"/><line x1="421.9" y1="434.10" x2="714.4" y2="434.10" stroke="#e0e0e0" stroke-width="1"/><line x1="421.9" y1="415.80" x2="714.4" y2="415.80" stroke="#e0e0e0" stroke-width="1"/><line x1="421.9" y1="397.50" x2="714.4" y2="397.50" stroke="#e0e0e0" stroke-width="1"/><line x1="421.9" y1="379.20" x2="714.4" y2="379.20" stroke="#e0e0e0" stroke-width="1"/><line x1="421.9" y1="360.90" x2="714.4" y2="360.90" stroke="#e0e0e0" stroke-width="1"/><line x1="421.9" y1="342.60" x2="714.4" y2="342.60" stroke="#e0e0e0" stroke-width="1"/><line x1="421.9" y1="324.30" x2="714.4" y2="324.30" stroke="#e0e0e0" stroke-width="1"/><rect x="435.24" y="352.39" width="16.5" height="100.01" fill="#a3c592"/><rect x="477.03" y="339.49" width="16.5" height="112.91" fill="#a3c592"/><rect x="518.81" y="331.80" width="16.5" height="120.60" fill="#a3c592"/><rect x="560.60" y="349.65" width="16.5" height="102.75" fill="#a3c592"/><rect x="602.39" y="354.13" width="16.5" height="98.27" fill="#a3c592"/><rect x="644.17" y="397.23" width="16.5" height="55.17" fill="#a3c592"/><rect x="685.96" y="430.26" width="16.5" height="22.14" fill="#a3c592"/><path d="M443.49 396.14 L485.28 390.32 L527.06 388.25 L568.85 388.30 L610.64 380.84 L652.42 350.43 L694.21 340.18" fill="none" stroke="#5a9a3a" stroke-width="2.9" stroke-linecap="round" stroke-linejoin="round"/></svg>
<div class="t b" style="left:12.20px;width:400px;text-align:right;top:448.00px;font-size:9.7px;line-height:9.7px;font-weight:normal;color:#595959;">0</div>
<div class="t b" style="left:12.20px;width:400px;text-align:right;top:430.00px;font-size:9.7px;line-height:9.7px;font-weight:normal;color:#595959;">200</div>
<div class="t b" style="left:12.20px;width:400px;text-align:right;top:411.00px;font-size:9.7px;line-height:9.7px;font-weight:normal;color:#595959;">400</div>
<div class="t b" style="left:12.20px;width:400px;text-align:right;top:393.00px;font-size:9.7px;line-height:9.7px;font-weight:normal;color:#595959;">600</div>
<div class="t b" style="left:12.20px;width:400px;text-align:right;top:375.00px;font-size:9.7px;line-height:9.7px;font-weight:normal;color:#595959;">800</div>
<div class="t b" style="left:12.20px;width:400px;text-align:right;top:356.00px;font-size:9.7px;line-height:9.7px;font-weight:normal;color:#595959;">1000</div>
<div class="t b" style="left:12.20px;width:400px;text-align:right;top:338.00px;font-size:9.7px;line-height:9.7px;font-weight:normal;color:#595959;">1200</div>
<div class="t b" style="left:12.20px;width:400px;text-align:right;top:320.00px;font-size:9.7px;line-height:9.7px;font-weight:normal;color:#595959;">1400</div>
<div class="t b" style="left:725.90px;top:447.00px;font-size:9.7px;line-height:9.7px;font-weight:normal;color:#595959;">0.00%</div>
<div class="t b" style="left:725.90px;top:421.00px;font-size:9.7px;line-height:9.7px;font-weight:normal;color:#595959;">10.00%</div>
<div class="t b" style="left:725.90px;top:396.00px;font-size:9.7px;line-height:9.7px;font-weight:normal;color:#595959;">20.00%</div>
<div class="t b" style="left:725.90px;top:370.00px;font-size:9.7px;line-height:9.7px;font-weight:normal;color:#595959;">30.00%</div>
<div class="t b" style="left:725.90px;top:345.00px;font-size:9.7px;line-height:9.7px;font-weight:normal;color:#595959;">40.00%</div>
<div class="t b" style="left:725.90px;top:319.00px;font-size:9.7px;line-height:9.7px;font-weight:normal;color:#595959;">50.00%</div>
<div class="t b" style="left:142.79px;width:600px;text-align:center;top:462.00px;font-size:9.7px;line-height:9.7px;font-weight:normal;color:#595959;">19-28</div>
<div class="t b" style="left:184.58px;width:600px;text-align:center;top:462.00px;font-size:9.7px;line-height:9.7px;font-weight:normal;color:#595959;">29-38</div>
<div class="t b" style="left:226.36px;width:600px;text-align:center;top:462.00px;font-size:9.7px;line-height:9.7px;font-weight:normal;color:#595959;">39-48</div>
<div class="t b" style="left:268.15px;width:600px;text-align:center;top:462.00px;font-size:9.7px;line-height:9.7px;font-weight:normal;color:#595959;">49-58</div>
<div class="t b" style="left:309.94px;width:600px;text-align:center;top:462.00px;font-size:9.7px;line-height:9.7px;font-weight:normal;color:#595959;">59-68</div>
<div class="t b" style="left:351.72px;width:600px;text-align:center;top:462.00px;font-size:9.7px;line-height:9.7px;font-weight:normal;color:#595959;">69-78</div>
<div class="t b" style="left:393.51px;width:600px;text-align:center;top:462.00px;font-size:9.7px;line-height:9.7px;font-weight:normal;color:#595959;">79-88</div>
<div style="position:absolute;left:384.20px;top:522.80px;width:399.80px;height:77.20px;background:#fff;border:1px solid #e3e3e3;box-sizing:border-box;"></div>
<div class="t b" style="left:283.20px;width:600px;text-align:center;top:534.00px;font-size:15.5px;line-height:15.5px;font-weight:normal;color:#595959;">Consumption Churn</div>
<div style="position:absolute;left:560.50px;top:569.00px;width:5.00px;height:5.00px;background:#a3c592;"></div>
<div class="t b" style="left:568.80px;top:567.00px;font-size:9.9px;line-height:9.9px;font-weight:normal;color:#595959;">Yes</div>
<div style="position:absolute;left:590.80px;top:569.00px;width:5.00px;height:5.00px;background:#5e9139;"></div>
<div class="t b" style="left:598.90px;top:567.00px;font-size:9.9px;line-height:9.9px;font-weight:normal;color:#595959;">No</div>
<div style="position:absolute;left:0.00px;top:583.00px;width:1000.00px;height:28.00px;background:#ebe9ef;"></div>
<svg style="position:absolute;left:0;top:583" width="100" height="28"><path d="M22.5 10.5 L18.8 14.5 L22.5 18.5" fill="none" stroke="#9a9a9a" stroke-width="1.1"/><path d="M49 10.5 L52.7 14.5 L49 18.5" fill="none" stroke="#9a9a9a" stroke-width="1.1"/></svg>
<div style="position:absolute;left:97.00px;top:587.00px;width:77.50px;height:21.70px;background:#1d9a84;border-radius:4px;"></div>
<div class="t b" style="left:-164.25px;width:600px;text-align:center;top:592.00px;font-size:12.8px;line-height:12.8px;font-weight:normal;color:#fff;">Dashboard</div>
<div style="position:absolute;left:374.60px;top:583.00px;width:100.70px;height:28.00px;background:#fff;"></div>
<div style="position:absolute;left:382.00px;top:605.30px;width:85.00px;height:2.00px;background:#418d6d;"></div>
<div class="t b" style="left:-82.40px;width:600px;text-align:center;top:592.00px;font-size:12.8px;line-height:12.8px;font-weight:normal;color:#404040;">Overview</div>
<div class="t b" style="left:13.00px;width:600px;text-align:center;top:592.00px;font-size:12.8px;line-height:12.8px;font-weight:normal;color:#404040;">Customer Pivots</div>
<div class="t b" style="left:124.50px;width:600px;text-align:center;top:590.00px;font-size:12.7px;line-height:12.7px;font-weight:normal;color:#1a1a1a;-webkit-text-stroke:0.35px #1a1a1a;">Churn Analysis</div>
<div class="t b" style="left:247.90px;width:600px;text-align:center;top:592.00px;font-size:12.8px;line-height:12.8px;font-weight:normal;color:#404040;">Databel - Aggregate</div>
<div class="t b" style="left:385.60px;width:600px;text-align:center;top:592.00px;font-size:12.8px;line-height:12.8px;font-weight:normal;color:#404040;">Databel - Customer</div>
<div style="position:absolute;left:255.20px;top:589.00px;width:1.00px;height:16.00px;background:#e1dfe5;"></div>
<div style="position:absolute;left:477.70px;top:589.00px;width:1.00px;height:16.00px;background:#e1dfe5;"></div>
<div style="position:absolute;left:618.80px;top:589.00px;width:1.00px;height:16.00px;background:#e1dfe5;"></div>
<div style="position:absolute;left:753.50px;top:589.00px;width:1.00px;height:16.00px;background:#e1dfe5;"></div>
<svg style="position:absolute;left:0;top:583" width="1000" height="28"><path d="M796.2 8.5 L796.2 20.5 M790.2 14.5 L802.2 14.5" stroke="#8a8a8a" stroke-width="1.1"/></svg>
</body></html>
